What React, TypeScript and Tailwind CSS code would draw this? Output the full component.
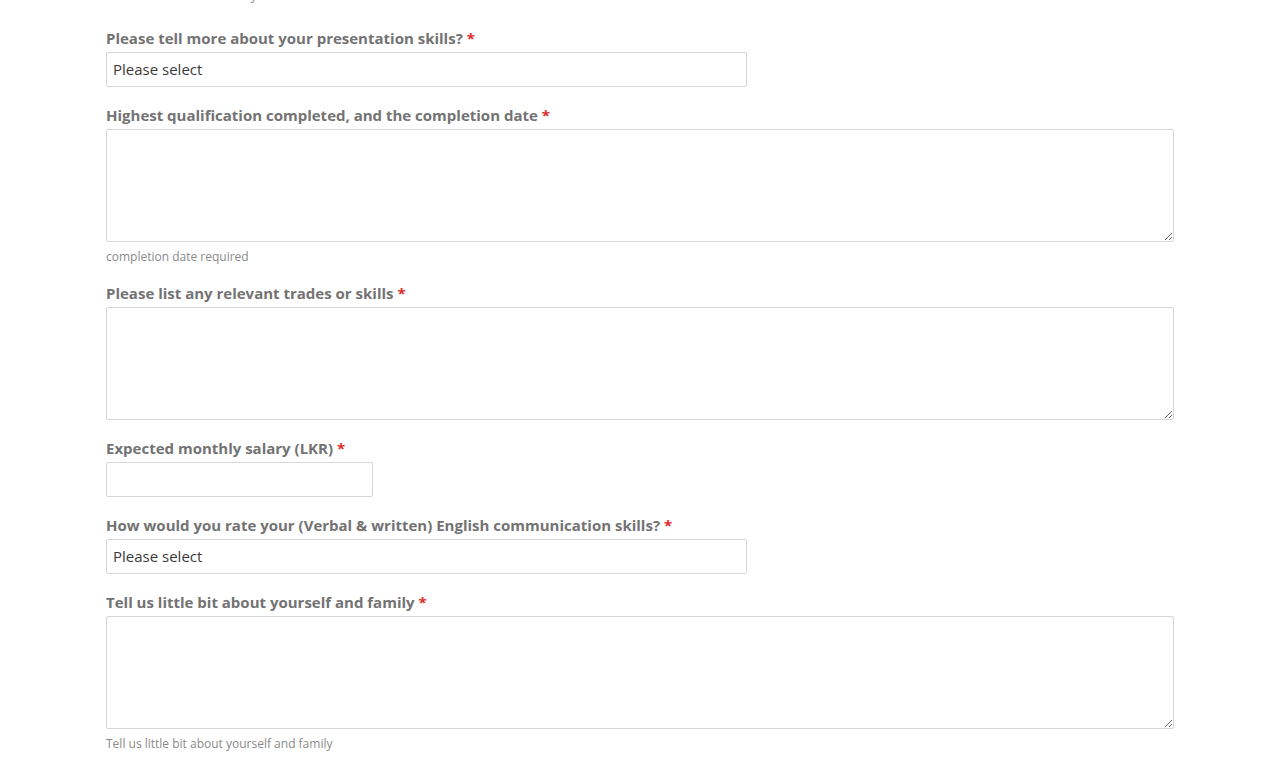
import { ReactNode } from "react";

const Label = ({ children }: { children: ReactNode }) => (
  <label className="block text-[15px] leading-[21px] font-bold text-[#737373] mb-[3px]">
    {children} <span className="text-[#e02b2b]">*</span>
  </label>
);

const Help = ({ children }: { children: ReactNode }) => (
  <p className="mt-[6px] text-[12px] leading-[17px] text-[#8a8a8a]">{children}</p>
);

const SelectBox = () => (
  <div className="w-[641px] h-[35px] border border-[#d6d6d6] rounded-[2px] bg-white flex items-center px-[6px] text-[15px] text-[#3a3a3a]">
    Please select
  </div>
);

const TextArea = () => (
  <textarea className="block w-[1068px] h-[113px] border border-[#d6d6d6] rounded-[2px] bg-white resize-y outline-none" />
);

const App = () => {
  return (
    <div className="h-[768px] bg-white font-['Open_Sans',sans-serif] pl-[106px] overflow-hidden">
      <div className="-mt-[13px] flex flex-col gap-[18px]">
        <p className="mb-[6px] text-[12px] leading-[17px] text-[#8a8a8a]">Please tell us more about your</p>

        <div>
          <Label>Please tell more about your presentation skills?</Label>
          <SelectBox />
        </div>

        <div>
          <Label>Highest qualification completed, and the completion date</Label>
          <TextArea />
          <Help>completion date required</Help>
        </div>

        <div>
          <Label>Please list any relevant trades or skills</Label>
          <TextArea />
        </div>

        <div>
          <Label>Expected monthly salary (LKR)</Label>
          <input className="block w-[267px] h-[35px] border border-[#d6d6d6] rounded-[2px] bg-white outline-none" />
        </div>

        <div>
          <Label>How would you rate your (Verbal &amp; written) English communication skills?</Label>
          <SelectBox />
        </div>

        <div>
          <Label>Tell us little bit about yourself and family</Label>
          <TextArea />
          <Help>Tell us little bit about yourself and family</Help>
        </div>
      </div>
    </div>
  );
};

export default App;
